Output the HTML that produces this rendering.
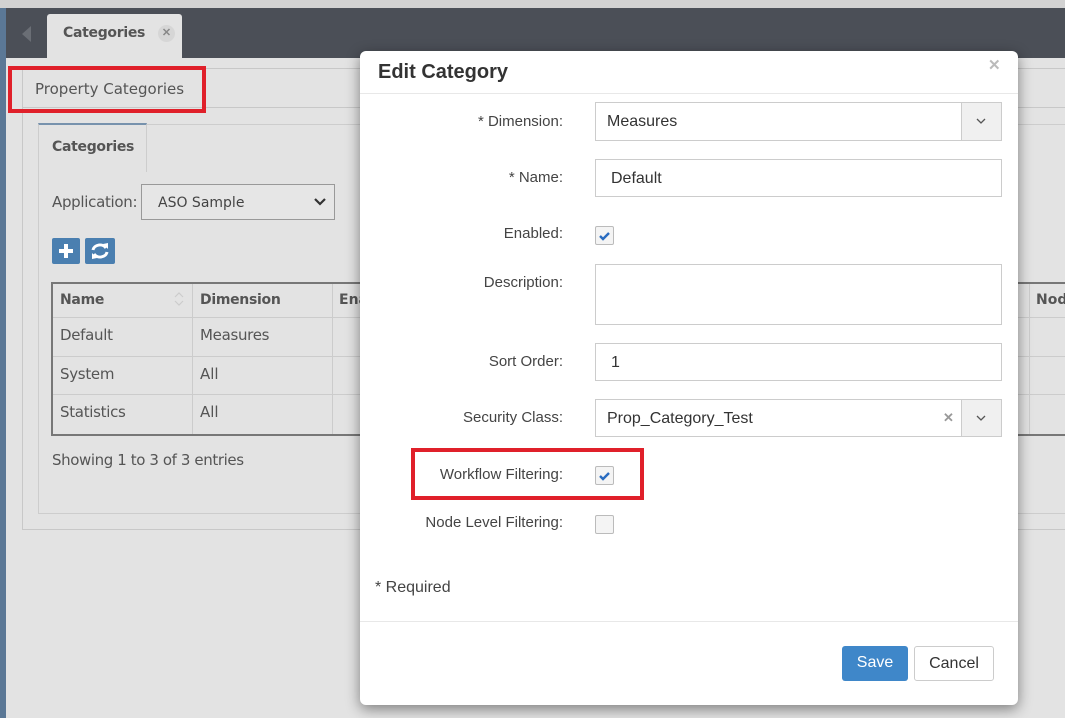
<!DOCTYPE html>
<html><head><style>
*{box-sizing:border-box;margin:0;padding:0}
body{width:1065px;height:718px;overflow:hidden;position:relative;background:#e3e3e3;font-family:"Liberation Sans",sans-serif;color:#444}
.a{position:absolute}
.os{font-family:"DejaVu Sans","Liberation Sans",sans-serif}
.lbl{position:absolute;right:502px;font-size:15px;color:#444;text-align:right;white-space:nowrap}
.inp{position:absolute;left:595px;width:407px;border:1px solid #ccc;background:#fff;font-size:16px;color:#333;padding-left:11px}
.cb{position:absolute;left:595px;width:19px;height:19px;border:1px solid #bbb;background:#f4f4f4;border-radius:2px}
.red{position:absolute;border:4px solid #e0202a}
</style></head><body>
<div class="a" style="left:0;top:0;width:1065px;height:8px;background:#d2d2d2"></div>
<div class="a" style="left:0;top:8px;width:1065px;height:50px;background:#4b4f57"></div>
<div class="a" style="left:0;top:8px;width:6px;height:710px;background:#5b7896"></div>
<div class="a" style="left:22px;top:26px;width:0;height:0;border-top:8px solid transparent;border-bottom:8px solid transparent;border-right:9px solid #6a6e75"></div>
<div class="a" style="left:47px;top:14px;width:135px;height:44px;background:#e3e3e3;border-radius:3px 3px 0 0"></div>
<div class="a os" style="left:63px;top:25px;font-size:14px;font-weight:bold;color:#555;letter-spacing:-0.3px">Categories</div>
<div class="a" style="left:158px;top:25px;width:17px;height:17px;border-radius:50%;background:#d6d6d6;color:#888;font-size:11px;text-align:center;line-height:17px;font-weight:bold">✕</div>
<!-- panel -->
<div class="a" style="left:22px;top:68px;width:1060px;height:462px;border:1px solid #c8c8c8"></div>
<div class="a" style="left:22px;top:107px;width:1060px;height:1px;background:#c8c8c8"></div>
<div class="a os" style="left:35px;top:80px;font-size:15px;color:#555">Property Categories</div>
<div class="a" style="left:38px;top:124px;width:1040px;height:390px;border:1px solid #cdcdcd"></div>
<div class="a" style="left:38px;top:123px;width:109px;height:49px;border:1px solid #cdcdcd;border-top:2px solid #7792ad;border-bottom:none;background:#e3e3e3"></div>
<div class="a os" style="left:52px;top:139px;font-size:14px;font-weight:bold;color:#555;letter-spacing:-0.3px">Categories</div>
<div class="a os" style="left:52px;top:193px;font-size:15px;color:#555;letter-spacing:-0.3px">Application:</div>
<div class="a os" style="left:141px;top:184px;width:194px;height:36px;border:1px solid #999;background:#e6e6e6;font-size:14px;color:#444;padding:10px 16px">ASO Sample</div>
<svg class="a" style="left:313px;top:197px" width="14" height="10"><path d="M2 2 L7 7 L12 2" stroke="#333" stroke-width="2.2" fill="none"/></svg>
<div class="a" style="left:52px;top:238px;width:28px;height:26px;background:#4a7fb0;border-radius:2px"></div>
<svg class="a" style="left:52px;top:238px" width="28" height="26"><path d="M14 6v14M7 13h14" stroke="#fff" stroke-width="4"/></svg>
<div class="a" style="left:85px;top:238px;width:30px;height:26px;background:#4a7fb0;border-radius:2px"></div>
<svg class="a" style="left:85px;top:238px" width="30" height="26"><path d="M8 12a7 6 0 0 1 13-2M22 14a7 6 0 0 1-13 2" stroke="#fff" stroke-width="3" fill="none"/><path d="M18 6l5 5l0-6z M12 20l-5-5l0 6z" fill="#fff"/></svg>
<!-- table -->
<div class="a" style="left:51px;top:282px;width:1020px;height:154px;border:2px solid #777"></div>
<div class="a" style="left:53px;top:317px;width:1012px;height:1px;background:#ccc"></div>
<div class="a" style="left:53px;top:356px;width:1012px;height:1px;background:#ccc"></div>
<div class="a" style="left:53px;top:394px;width:1012px;height:1px;background:#ccc"></div>
<div class="a" style="left:192px;top:284px;width:1px;height:150px;background:#ccc"></div>
<div class="a" style="left:332px;top:284px;width:1px;height:150px;background:#ccc"></div>
<div class="a" style="left:1029px;top:284px;width:1px;height:150px;background:#ccc"></div>
<div class="a os" style="left:60px;top:292px;font-size:14px;font-weight:bold;color:#555;letter-spacing:-0.3px">Name</div>
<svg class="a" style="left:173px;top:290px" width="12" height="18"><path d="M2 7l4-4l4 4M2 11l4 4l4-4" stroke="#ccc" stroke-width="1.2" fill="none"/></svg>
<div class="a os" style="left:200px;top:292px;font-size:14px;font-weight:bold;color:#555;letter-spacing:-0.3px">Dimension</div>
<div class="a os" style="left:339px;top:292px;font-size:14px;font-weight:bold;color:#555">Ena</div>
<div class="a os" style="left:1036px;top:292px;font-size:14px;font-weight:bold;color:#555">Nod</div>
<div class="a os" style="left:60px;top:326px;font-size:15px;color:#555;letter-spacing:-0.3px">Default</div>
<div class="a os" style="left:200px;top:326px;font-size:15px;color:#555;letter-spacing:-0.3px">Measures</div>
<div class="a os" style="left:60px;top:365px;font-size:15px;color:#555;letter-spacing:-0.3px">System</div>
<div class="a os" style="left:200px;top:365px;font-size:15px;color:#555">All</div>
<div class="a os" style="left:60px;top:403px;font-size:15px;color:#555;letter-spacing:-0.3px">Statistics</div>
<div class="a os" style="left:200px;top:403px;font-size:15px;color:#555">All</div>
<div class="a os" style="left:52px;top:451px;font-size:15px;color:#555;letter-spacing:-0.4px">Showing 1 to 3 of 3 entries</div>
<div class="red" style="left:8px;top:66px;width:198px;height:47px"></div>
<!-- modal -->
<div class="a" style="left:360px;top:51px;width:658px;height:654px;background:#fff;border-radius:6px;box-shadow:0 4px 14px rgba(0,0,0,.45)"></div>
<div class="a" style="left:378px;top:61px;font-size:20px;font-weight:bold;color:#333">Edit Category</div>
<div class="a" style="left:988px;top:56px;font-size:15px;color:#bbb;font-weight:bold">✕</div>
<div class="a" style="left:360px;top:93px;width:658px;height:1px;background:#e8e8e8"></div>
<div class="lbl" style="top:113px">* Dimension:</div>
<div class="inp" style="top:102px;height:39px;line-height:38px">Measures</div>
<div class="a" style="left:961px;top:102px;width:41px;height:39px;border:1px solid #ccc;background:#f0f0f0"></div>
<svg class="a" style="left:975px;top:117px" width="12" height="8"><path d="M2 2l4 4l4-4" stroke="#555" stroke-width="1.3" fill="none"/></svg>
<div class="lbl" style="top:169px">* Name:</div>
<div class="inp" style="top:159px;height:38px;line-height:37px;padding-left:15px">Default</div>
<div class="lbl" style="top:225px">Enabled:</div>
<div class="cb" style="top:226px"></div>
<svg class="a" style="left:597px;top:229px" width="15" height="13"><path d="M3 7l3 3l6-6" stroke="#2a6cc0" stroke-width="2.4" fill="none"/></svg>
<div class="lbl" style="top:274px">Description:</div>
<div class="inp" style="top:264px;height:61px"></div>
<div class="lbl" style="top:353px">Sort Order:</div>
<div class="inp" style="top:343px;height:38px;line-height:37px;padding-left:15px">1</div>
<div class="lbl" style="top:409px">Security Class:</div>
<div class="inp" style="top:399px;height:38px;line-height:37px">Prop_Category_Test</div>
<div class="a" style="left:943px;top:410px;font-size:13px;color:#999;font-weight:bold">✕</div>
<div class="a" style="left:961px;top:399px;width:41px;height:38px;border:1px solid #ccc;background:#f0f0f0"></div>
<svg class="a" style="left:975px;top:414px" width="12" height="8"><path d="M2 2l4 4l4-4" stroke="#555" stroke-width="1.3" fill="none"/></svg>
<div class="lbl" style="top:466px">Workflow Filtering:</div>
<div class="cb" style="top:466px"></div>
<svg class="a" style="left:597px;top:469px" width="15" height="13"><path d="M3 7l3 3l6-6" stroke="#2a6cc0" stroke-width="2.4" fill="none"/></svg>
<div class="red" style="left:411px;top:448px;width:233px;height:52px"></div>
<div class="lbl" style="top:514px">Node Level Filtering:</div>
<div class="cb" style="top:515px"></div>
<div class="a" style="left:375px;top:579px;font-size:16px;color:#444">* Required</div>
<div class="a" style="left:360px;top:621px;width:658px;height:1px;background:#e8e8e8"></div>
<div class="a" style="left:842px;top:646px;width:66px;height:35px;background:#3f87c9;border-radius:3px;color:#fff;font-size:16px;text-align:center;line-height:34px">Save</div>
<div class="a" style="left:914px;top:646px;width:80px;height:35px;border:1px solid #ccc;border-radius:3px;color:#333;font-size:16px;text-align:center;line-height:33px;background:#fff">Cancel</div>
</body></html>
